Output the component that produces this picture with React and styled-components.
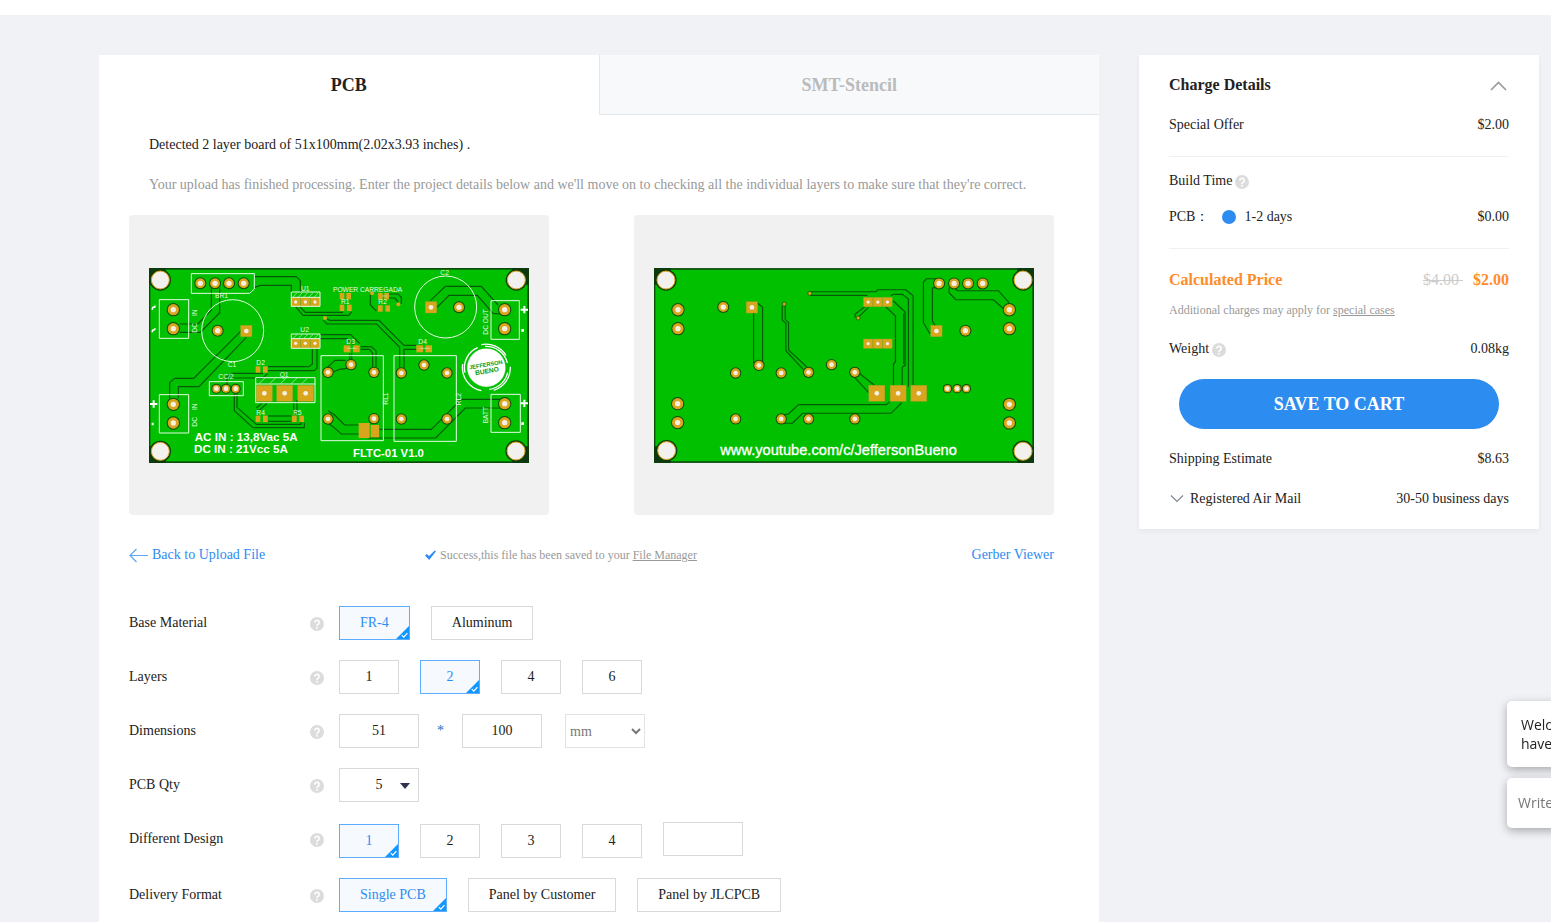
import React, { useState } from 'react';
import styled, { createGlobalStyle, css } from 'styled-components';

const GlobalStyle = createGlobalStyle`
  * {
    box-sizing: border-box;
  }
  body {
    margin: 0;
    background: #f0f2f6;
    color: #222;
    font: 14px/20px 'Liberation Serif', 'Times New Roman', serif;
  }
  button, input, select {
    font: inherit;
    color: inherit;
    margin: 0;
  }
  a {
    color: inherit;
  }
`;

const Page = styled.div`
  display: flex;
  flex-direction: column;
  min-height: 100vh;
`;

const TopBar = styled.header`
  height: 15px;
  background: #fff;
`;

const Content = styled.div`
  flex: 1;
  display: flex;
  gap: 40px;
  padding: 40px 12px 0 99px;
`;

const Order = styled.main`
  flex: 1;
  min-width: 0;
  background: #fff;
`;

const Tabs = styled.div`
  display: flex;
`;

const Tab = styled.button`
  flex: 1;
  height: 60px;
  border: 0;
  background: #fff;
  font-size: 18px;
  font-weight: bold;
  cursor: pointer;
  ${({ $active }) =>
    !$active &&
    css`
      background: #f7f9fb;
      border: solid #e2e8ea;
      border-width: 0 0 1px 1px;
      color: #bbb;
    `}
`;

const Messages = styled.div`
  padding: 10px 50px;
  p {
    margin: 0;
    line-height: 40px;
  }
  p + p {
    color: #999;
  }
`;

const Body = styled.div`
  padding: 0 45px 10px 30px;
`;

const Previews = styled.div`
  display: flex;
  justify-content: space-between;
`;

const Preview = styled.div`
  display: flex;
  align-items: center;
  justify-content: center;
  width: 420px;
  height: 300px;
  border-radius: 4px;
  background: #f1f1f1;
  svg {
    width: 380px;
    height: 195px;
  }
`;

const Links = styled.div`
  display: grid;
  grid-template-columns: 32% 1fr auto;
  align-items: center;
  height: 40px;
  margin: 20px 0 31px;
`;

const BlueLink = styled.a`
  display: flex;
  align-items: center;
  gap: 4px;
  color: #2d8cf0;
  text-decoration: none;
`;

const Note = styled.p`
  display: flex;
  align-items: center;
  gap: 4px;
  margin: 0;
  font-size: 12px;
  color: #999;
`;

const Row = styled.div`
  display: flex;
  align-items: flex-start;
  margin-bottom: 20px;
`;

const Name = styled.label`
  display: flex;
  align-items: center;
  justify-content: space-between;
  width: 195px;
  height: 34px;
  margin-right: 15px;
`;

const Choices = styled.div`
  display: flex;
  align-items: flex-end;
  gap: ${({ $gap }) => $gap || 21}px;
`;

const field = css`
  height: 34px;
  border: 1px solid #d9d9d9;
  border-radius: 0;
  background: #fff;
`;

const Choice = styled.button`
  ${field}
  position: relative;
  min-width: 60px;
  padding: 0 20px;
  cursor: pointer;
  svg {
    position: absolute;
    right: 0;
    bottom: 0;
  }
  ${({ $on }) =>
    $on &&
    css`
      background: #f6faff;
      border-color: #5cadff;
      color: #2d8cf0;
    `}
`;

const TextField = styled.input`
  ${field}
  width: 80px;
  text-align: center;
  margin-bottom: ${({ $raised }) => ($raised ? 2 : 0)}px;
`;

const Size = styled.div`
  display: flex;
  align-items: center;
  gap: 18px;
  span {
    color: #1c6fb8;
  }
`;

const UnitSelect = styled.select`
  ${field}
  width: 80px;
  border-color: #e3e3e3;
  color: #777;
`;

const QtyBox = styled.div`
  position: relative;
  select {
    ${field}
    width: 80px;
    appearance: none;
    text-align-last: center;
  }
  svg {
    position: absolute;
    right: 9px;
    top: 15px;
    pointer-events: none;
  }
`;

const Charges = styled.aside`
  align-self: flex-start;
  width: 400px;
  padding: 10px 30px;
  background: #fff;
  box-shadow: 0 2px 6px rgba(0, 0, 0, 0.05);
`;

const Section = styled.section`
  padding: ${({ $pad }) => $pad || '0'};
  & + & {
    border-top: 1px solid #f0f1f3;
  }
`;

const Line = styled.div`
  display: flex;
  align-items: center;
  justify-content: space-between;
  height: ${({ $compact }) => ($compact ? 36 : 40)}px;
`;

const Group = styled.div`
  display: flex;
  align-items: center;
  gap: ${({ $gap }) => $gap || 3}px;
`;

const Title = styled.h2`
  margin: 0;
  font-size: 16px;
  color: ${({ $orange }) => ($orange ? '#ff8c28' : 'inherit')};
`;

const Toggle = styled.button`
  display: flex;
  padding: 0;
  border: 0;
  background: none;
  cursor: pointer;
`;

const Price = styled.strong`
  font-size: 16px;
  color: #ff8c28;
`;

const OldPrice = styled.del`
  font-size: 16px;
  color: #ccc;
  white-space: pre;
`;

const Days = styled.label`
  display: flex;
  align-items: center;
  gap: 8px;
  input {
    appearance: none;
    width: 14px;
    height: 14px;
    border-radius: 50%;
    background: #2d8cf0;
  }
`;

const Small = styled.p`
  margin: 0 0 9px;
  font-size: 12px;
  color: #999;
`;

const SaveButton = styled.button`
  display: block;
  width: calc(100% - 20px);
  height: 50px;
  margin: 10px;
  border: 0;
  border-radius: 25px;
  background: #2d8cf0;
  color: #fff;
  font-size: 18px;
  font-weight: bold;
  cursor: pointer;
`;

const Chat = styled.div`
  position: fixed;
  right: -10px;
  bottom: 94px;
  display: flex;
  flex-direction: column;
  gap: 11px;
  width: 54px;
  font: 14px/19px 'Open Sans', sans-serif;
`;

const bubble = css`
  border: 0;
  border-radius: 5px;
  background: #fff;
  box-shadow: 0 3px 10px rgba(0, 0, 0, 0.3);
`;

const Welcome = styled.div`
  ${bubble}
  height: 66px;
  padding: 14px 0 14px 14px;
  overflow: hidden;
`;

const ChatInput = styled.input`
  ${bubble}
  width: 100%;
  height: 50px;
  padding: 0 0 2px 11px;
  &::placeholder {
    color: #777;
  }
`;

const HelpIcon = styled.svg`
  width: 14px;
  height: 14px;
  margin-top: 2px;
`;

const Help = () => (
  <HelpIcon viewBox="0 0 14 14" aria-hidden="true">
    <circle cx="7" cy="7" r="7" fill="#dcdcdc" />
    <path d="M4.8 5.500a2.200 2.100 0 1 1 3.400 1.700c-.8.6-1.200.9-1.200 1.700" fill="none" stroke="#fff" strokeWidth="1.600" />
    <circle cx="7" cy="10.800" r="1" fill="#fff" />
  </HelpIcon>
);

const Corner = () => (
  <svg width="13" height="13" viewBox="0 0 13 13" aria-hidden="true">
    <path d="M13 0V13H0Z" fill="#1296ff" />
    <path d="M5.8 9.2l2 2 3.6-4" fill="none" stroke="#fff" strokeWidth="1.2" />
  </svg>
);

/* circuit boards, drawn in thirds of a pixel */

const Traces = ({ lines }) => (
  <g fill="none" stroke="#045a06" strokeWidth="3.5">
    {lines.map(l => (
      <polyline key={l} points={l} />
    ))}
  </g>
);

const Pads = ({ list, r }) =>
  list.map(([x, y]) => (
    <g key={`${x}-${y}`}>
      <circle cx={x} cy={y} r={r + 3} fill="#0b4a0b" />
      <circle cx={x} cy={y} r={r} fill="#d9a51c" />
      <circle cx={x} cy={y} r={r > 14 ? 8 : 7} fill="#f5f0e4" />
    </g>
  ));

const Squares = ({ list, size }) =>
  list.map(([x, y]) => (
    <g key={`${x}-${y}`}>
      <rect x={x - size / 2} y={y - size / 2} width={size} height={size} fill="#d9a51c" stroke="#a5a02a" />
      <circle cx={x} cy={y} r={size > 30 ? 7 : 5} fill="#f5f0e4" />
    </g>
  ));

const Holes = ({ list }) =>
  list.map(([x, y]) => (
    <g key={`${x}-${y}`}>
      <circle cx={x} cy={y} r="32" fill="#0c3a0c" />
      <circle cx={x} cy={y} r="27" fill="#f3f1ee" stroke="#d9a51c" strokeWidth="3" />
    </g>
  ));

const Base = ({ x, width }) => (
  <>
    <rect x={x} y="24" width={width} height="585" fill="#0c4a0c" />
    <rect x={x + 4} y="29" width={width - 9} height="575" fill="#00c000" />
    {[
      [x, 24],
      [x + width - 50, 24],
      [x, 559],
      [x + width - 50, 559]
    ].map(([cx, cy]) => (
      <rect key={`${cx}-${cy}`} x={cx} y={cy} width="50" height="50" fill="#0c3a0c" />
    ))}
  </>
);

const topTraces = [
  '345,50 470,50 482,62 482,96',
  '345,82 362,76 455,76 455,96',
  '215,85 215,150 175,192 120,192',
  '240,85 240,158 182,217 120,217',
  '305,212 162,355 105,355 90,368 90,415',
  '320,232 178,380 116,380 116,415',
  '262,372 262,350 280,340 370,340',
  '266,354 370,354 384,340',
  '384,320 508,320 518,312 518,266',
  '372,332 524,332 532,324 532,266',
  '284,400 284,452 340,503 494,503 494,488',
  '292,400 292,442 350,493 484,493 484,486',
  '382,430 360,450 352,450',
  '366,430 350,444',
  '385,468 455,468',
  '385,484 455,484',
  '462,430 462,465',
  '472,420 472,465',
  '468,140 490,166 628,166 636,155',
  '480,140 497,157 610,157',
  '550,180 562,192 711,192 780,262 780,325',
  '562,176 570,181 718,181 793,256 830,256',
  '793,325 793,268 830,268',
  '540,224 633,224 660,250',
  '540,236 622,236 642,254',
  '663,260 695,260 709,272 709,320',
  '663,268 690,268 699,280 699,320',
  '630,280 630,300',
  '636,280 636,300',
  '560,325 586,301 618,301',
  '572,340 600,328 622,325',
  '565,452 585,465 615,495 657,495',
  '565,490 580,500 605,522 657,522',
  '720,508 875,508 965,418 1085,418',
  '685,534 888,534 977,444 1085,444',
  '872,122 917,79 1025,79 1075,135',
  '892,142 928,106 1013,106 1060,160 1085,162',
  '700,100 692,106 692,135 710,153',
  '745,102 775,102 785,112 785,132',
  '745,114 765,114 774,124 774,132'
];

const connector = [
  [101, 149],
  [101, 206],
  [101, 433],
  [101, 489],
  [1095, 149],
  [1095, 206],
  [1095, 431],
  [1095, 488]
];

const chips = [
  [355, 328], [377, 328], [355, 476], [377, 476], [464, 476], [486, 476],
  [607, 108], [627, 108], [607, 143], [629, 143], [722, 108], [741, 108],
  [722, 145], [744, 145]
];

const labels = [
  ['BR1', 226, 114],
  ['U1', 484, 93],
  ['U2', 482, 216],
  ['C1', 264, 321],
  ['D2', 350, 316],
  ['CC/2', 236, 358],
  ['Q1', 420, 350],
  ['R4', 350, 465],
  ['R5', 460, 465],
  ['R1', 604, 132],
  ['R2', 716, 132],
  ['D3', 620, 252],
  ['D4', 836, 252],
  ['C2', 902, 46],
  ['POWER CARREGADA', 580, 95]
];

const sideLabels = [
  ['IN', 171, 168],
  ['DC', 172, 218],
  ['IN', 171, 450],
  ['DC', 172, 500],
  ['RL1', 746, 434],
  ['RL2', 964, 436],
  ['DC OUT', 1045, 224],
  ['BATT', 1046, 490]
];

const TopBoard = () => (
  <svg viewBox="28 24 1140 585" fontFamily="'Liberation Sans', Arial, sans-serif" fontWeight="bold">
    <Base x={28} width={1140} />
    <Traces lines={topTraces} />
    <Holes list={[[62, 60], [62, 574], [1130, 60], [1129, 573]]} />
    <Pads r={17} list={connector} />
    <Pads r={15} list={[[182, 70], [226, 70], [268, 70], [312, 70], [234, 212], [958, 142]]} />
    <Pads r={14} list={[[565, 337], [565, 477], [634, 314], [703, 337], [703, 476], [785, 339], [785, 477], [853, 315], [922, 339], [922, 477]]} />
    <Pads r={12} list={[[230, 386], [259, 386], [288, 386]]} />
    <Squares size={34} list={[[320, 213], [874, 142]]} />
    <Squares size={48} list={[[374, 400], [435, 400], [498, 400]]} />
    <Squares size={28} list={[[468, 126], [497, 126], [526, 126], [468, 250], [497, 250], [526, 250]]} />
    <g fill="#d9a51c">
      {chips.map(([x, y]) => (
        <rect key={`${x}-${y}`} x={x - 7} y={y - 9} width="14" height="19" />
      ))}
      <rect x="612" y="256" width="20" height="21" />
      <rect x="640" y="256" width="20" height="21" />
      <rect x="830" y="256" width="20" height="21" />
      <rect x="857" y="256" width="20" height="21" />
      <rect x="657" y="489" width="33" height="45" />
      <rect x="693" y="495" width="25" height="37" />
      <circle cx="556" cy="174" r="6" />
      <circle cx="697" cy="100" r="6" />
      <circle cx="776" cy="133" r="6" />
    </g>
    <g fill="none" stroke="#e4fbe4" strokeWidth="3">
      <path d="M155 41H344V87L330 100H155Z" />
      <path d="M59 119H147V235H59Z" />
      <path d="M59 404H147V519H59Z" />
      <path d="M1054 122H1139V238H1054Z" />
      <path d="M1054 403H1142V517H1054Z" />
      <circle cx="279" cy="212" r="93" />
      <circle cx="918" cy="141" r="93" />
      <path d="M455 96H541V139H455ZM455 112H541" />
      <path d="M455 222H541V265H455ZM455 236H541" />
      <path d="M209 365H311V407H209Z" />
      <path d="M348 353H526V428H348ZM348 372H526" />
      <path d="M544 287H731V542H544Z" />
      <path d="M763 287H950V544H763Z" />
    </g>
    <path
      d="M460 111l12-13m4 13l12-13m4 13l12-13m4 13l12-13m4 13l12-13M460 235l12-11m4 11l12-11m4 11l12-11m4 11l12-11m4 11l12-11M358 371l18-17m14 17l18-17m14 17l18-17m14 17l18-17m14 17l18-17M622 265h28m192 0h28M728 108h14"
      fill="none"
      stroke="#c6f3c6"
      strokeWidth="2"
    />
    <g fill="none" stroke="#fff">
      <circle cx="1040" cy="323" r="57" fill="#fff" />
      <path d="M1036 259a65 65 0 0 1 67 50M1104 338a65 65 0 0 1-55 50M976 338a65 65 0 0 1 38-75" strokeWidth="4" />
      <path d="M1025 254a71 71 0 0 1 74 32M1112 320a71 71 0 0 1-50 71M1025 392a71 71 0 0 1-56-80" strokeWidth="4" />
      <path d="M31 432h22M42 421v22M1143 149h22M1154 138v22M1143 430h22M1154 419v22" strokeWidth="6" />
      <path d="M36 492h6M1145 211h8M1145 491h8" strokeWidth="8" />
      <path d="M38 149c0-14 8-2 8-12M38 217c0-14 8-2 8-12" strokeWidth="5" />
    </g>
    <g fill="#0a9a0a" fontSize="20" textAnchor="middle" transform="rotate(-10 1040 323)">
      <text x="1040" y="320" fontSize="17">JEFFERSON</text>
      <text x="1040" y="340">BUENO</text>
    </g>
    <g fill="#e4fbe4" fontSize="20" fontWeight="normal">
      {labels.map(([t, x, y]) => (
        <text key={t} x={x} y={y}>{t}</text>
      ))}
      {sideLabels.map(([t, x, y]) => (
        <text key={`${t}${x}${y}`} transform={`translate(${x} ${y}) rotate(-90)`}>{t}</text>
      ))}
    </g>
    <g fill="#fff" fontSize="35">
      <text x="165" y="543">AC IN : 13,8Vac 5A</text>
      <text x="163" y="580">DC IN : 21Vcc 5A</text>
      <text x="640" y="591" fontSize="34">FLTC-01 V1.0</text>
    </g>
  </svg>
);

const bottomTraces = [
  '323,158 323,310',
  '334,128 350,142 350,305',
  '409,138 409,180 420,190 420,272 472,328',
  '418,138 418,178 428,188 428,270 484,322',
  '493,95 690,95 696,89 780,89 802,107',
  '493,106 665,106',
  '660,138 628,162 628,172',
  '668,142 637,172',
  '735,108 742,103 770,103 788,117 788,380',
  '802,107 802,376',
  '718,138 749,168 749,305 743,312 743,376',
  '742,122 778,156 778,316 769,322 769,376',
  '774,160 774,312',
  '872,56 842,56 833,66 833,188 853,222',
  '872,82 860,84 860,184 868,196',
  '910,82 910,98 930,119 1043,119 1078,150',
  '925,82 935,92 1058,92 1090,128',
  '640,340 686,376',
  '624,350 669,398',
  '410,465 428,462 458,434 722,434 732,425',
  '410,490 440,490 470,460 736,460 768,428'
];

const BottomBoard = () => (
  <svg viewBox="24 24 1141 585" fontFamily="'Liberation Sans', Arial, sans-serif">
    <Base x={24} width={1141} />
    <Traces lines={bottomTraces} />
    <Holes list={[[60, 60], [62, 572], [1132, 60], [1132, 574]]} />
    <Pads r={17} list={[[96, 149], [96, 206], [95, 431], [95, 488], [1091, 149], [1091, 206], [1091, 433], [1091, 489]]} />
    <Pads r={15} list={[[232, 141], [880, 70], [925, 70], [967, 70], [1011, 70], [959, 212]]} />
    <Pads r={14} list={[[269, 339], [339, 316], [406, 339], [488, 337], [557, 314], [627, 337], [269, 477], [406, 477], [488, 477], [627, 477]]} />
    <Pads r={11} list={[[905, 386], [934, 386], [962, 386]]} />
    <Squares size={34} list={[[318, 142], [872, 213]]} />
    <Squares size={48} list={[[693, 400], [757, 400], [819, 400]]} />
    <Squares size={28} list={[[667, 126], [696, 126], [725, 126], [667, 251], [696, 251], [725, 251]]} />
    <g fill="#d9a51c" stroke="#0b4a0b" strokeWidth="2">
      <circle cx="492" cy="100" r="6" />
      <circle cx="415" cy="132" r="6" />
      <circle cx="637" cy="174" r="6" />
    </g>
    <text x="223" y="584" fontSize="44" fill="#fff" stroke="#fff">www.youtube.com/c/JeffersonBueno</text>
  </svg>
);

const OptionRow = ({ name, options, initial, children }) => {
  const [value, setValue] = useState(initial);
  return (
    <Row>
      <Name as="div">
        {name}
        <Help />
      </Name>
      <Choices role="group" aria-label={name}>
        {options.map(o => (
          <Choice key={o} type="button" $on={o === value} aria-pressed={o === value} onClick={() => setValue(o)}>
            {o}
            {o === value && <Corner />}
          </Choice>
        ))}
        {children}
      </Choices>
    </Row>
  );
};

const ChargeDetails = () => (
  <Charges>
    <Section $pad="0 0 11px">
      <Line>
        <Title>Charge Details</Title>
        <Toggle type="button" aria-label="Collapse charge details">
          <svg width="20" height="12" viewBox="0 0 20 12">
            <path d="M2 11L9.500 3.500L17 11" fill="none" stroke="#999" strokeWidth="1.600" />
          </svg>
        </Toggle>
      </Line>
      <Line>
        <span>Special Offer</span>
        <span>$2.00</span>
      </Line>
    </Section>
    <Section $pad="6px 0 13px">
      <Line $compact>
        <Group>
          Build Time <Help />
        </Group>
      </Line>
      <Line $compact>
        <Group $gap={13}>
          <span>PCB：</span>
          <Days>
            <input type="radio" name="build" defaultChecked />
            1-2 days
          </Days>
        </Group>
        <span>$0.00</span>
      </Line>
    </Section>
    <Section $pad="11px 0 0">
      <Line>
        <Title $orange>Calculated Price</Title>
        <Group $gap={10}>
          <OldPrice>{'$4.00 '}</OldPrice>
          <Price>$2.00</Price>
        </Group>
      </Line>
      <Small>
        Additional charges may apply for <a href="#cases">special cases</a>
      </Small>
      <Line>
        <Group>
          Weight <Help />
        </Group>
        <span>0.08kg</span>
      </Line>
      <SaveButton type="button">SAVE TO CART</SaveButton>
      <Line>
        <span>Shipping Estimate</span>
        <span>$8.63</span>
      </Line>
      <Line>
        <Group $gap={4}>
          <svg width="17" height="10" viewBox="0 0 17 10" aria-hidden="true">
            <path d="M2 1.500L8 7.500L14 1.500" fill="none" stroke="#808695" strokeWidth="1.200" />
          </svg>
          Registered Air Mail
        </Group>
        <span>30-50 business days</span>
      </Line>
    </Section>
  </Charges>
);

const App = () => (
  <Page>
    <GlobalStyle />
    <TopBar />
    <Content>
      <Order>
        <Tabs>
          <Tab type="button" $active>PCB</Tab>
          <Tab type="button">SMT-Stencil</Tab>
        </Tabs>
        <Messages>
          <p>Detected 2 layer board of 51x100mm(2.02x3.93 inches) .</p>
          <p>
            Your upload has finished processing. Enter the project details below and we'll move on to
            checking all the individual layers to make sure that they're correct.
          </p>
        </Messages>
        <Body>
          <Previews>
            <Preview>
              <TopBoard />
            </Preview>
            <Preview>
              <BottomBoard />
            </Preview>
          </Previews>
          <Links>
            <BlueLink href="#upload">
              <svg width="19" height="15" viewBox="0 0 19 15" aria-hidden="true">
                <path d="M7.500 1L1 7.500L7.500 14M1 7.500H19" fill="none" stroke="#5ca8f5" strokeWidth="1.200" />
              </svg>
              Back to Upload File
            </BlueLink>
            <Note>
              <svg width="11" height="10" viewBox="0 0 11 10" aria-hidden="true">
                <path d="M0 5.500L1.800 4L4 6L9.800 0.500L11 1.200L4.200 10Z" fill="#2d8cf0" />
              </svg>
              <span>
                Success,this file has been saved to your <a href="#files">File Manager</a>
              </span>
            </Note>
            <BlueLink href="#viewer">Gerber Viewer</BlueLink>
          </Links>
          <OptionRow name="Base Material" options={['FR-4', 'Aluminum']} initial="FR-4" />
          <OptionRow name="Layers" options={['1', '2', '4', '6']} initial="2" />
          <Row>
            <Name htmlFor="width">
              Dimensions
              <Help />
            </Name>
            <Choices $gap={23}>
              <Size>
                <TextField id="width" defaultValue="51" />
                <span>*</span>
                <TextField aria-label="Height" defaultValue="100" />
              </Size>
              <UnitSelect aria-label="Unit" defaultValue="mm">
                <option>mm</option>
                <option>inch</option>
              </UnitSelect>
            </Choices>
          </Row>
          <Row>
            <Name htmlFor="qty">
              PCB Qty
              <Help />
            </Name>
            <QtyBox>
              <select id="qty" defaultValue="5">
                <option>5</option>
                <option>10</option>
              </select>
              <svg width="10" height="6" viewBox="0 0 10 6" aria-hidden="true">
                <path d="M0 0H10L5 6Z" fill="#2f3350" />
              </svg>
            </QtyBox>
          </Row>
          <OptionRow name="Different Design" options={['1', '2', '3', '4']} initial="1">
            <TextField $raised aria-label="Other design count" />
          </OptionRow>
          <OptionRow
            name="Delivery Format"
            options={['Single PCB', 'Panel by Customer', 'Panel by JLCPCB']}
            initial="Single PCB"
          />
        </Body>
      </Order>
      <ChargeDetails />
    </Content>
    <Chat>
      <Welcome>
        Welc
        <br />
        have
      </Welcome>
      <ChatInput aria-label="Message" placeholder="Write" />
    </Chat>
  </Page>
);

export default App;
